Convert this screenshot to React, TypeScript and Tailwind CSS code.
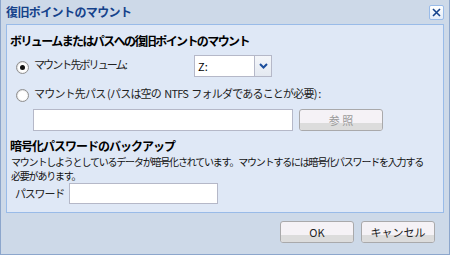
import React from "react";

const jp = "font-['MS_UI_Gothic','Noto_Sans_CJK_JP',sans-serif]";

const Radio = ({ checked }: { checked?: boolean }) => (
  <span className="relative inline-flex h-[13px] w-[13px] shrink-0 items-center justify-center rounded-full border border-[#8f8f8f] bg-gradient-to-br from-[#dcdcdc] to-white">
    <span className="h-[9px] w-[9px] rounded-full bg-white" />
    {checked && (
      <span className="absolute h-[5px] w-[5px] rounded-full bg-[#111]" />
    )}
  </span>
);

const Btn = ({
  label,
  disabled,
  className,
}: {
  label: string;
  disabled?: boolean;
  className?: string;
}) => (
  <button
    className={
      "relative h-[22px] overflow-hidden rounded-[3px] border border-[#a9a9ab] bg-[#f5f2f6] text-[11px] " +
      (disabled ? "text-[#9a9a9a] " : "text-[#222] ") +
      (className ?? "")
    }
  >
    <span className="absolute inset-x-0 bottom-0 h-[7px] bg-[#dcdcdc]" />
    <span className="relative leading-[20px]">{label}</span>
  </button>
);

export default function App() {
  return (
    <div
      className={`flex h-[255px] w-[450px] flex-col border-x border-b border-[#8ca6cc] bg-[#cdd9e8] ${jp} antialiased`}
    >
      {/* title bar */}
      <div className="flex h-[24px] items-center justify-between pl-[5px] pr-[5px]">
        <span className="text-[12px] font-bold tracking-[-0.6px] text-[#15428b]">
          復旧ポイントのマウント
        </span>
        <span className="flex h-[15px] w-[15px] items-center justify-center rounded-[2px] border border-[#99bbe8] bg-gradient-to-b from-white to-[#e3ecf8]">
          <svg width="9" height="9" viewBox="0 0 9 9">
            <path
              d="M1 1L8 8M8 1L1 8"
              stroke="#15428b"
              strokeWidth="1.6"
              fill="none"
            />
          </svg>
        </span>
      </div>

      {/* panel */}
      <div className="mx-[5px] flex h-[189px] flex-col border border-[#99bbe8] bg-[#dfe8f6] px-[3px]">
        <h3 className="mt-[9px] text-[12px] font-bold leading-[14px] tracking-[-1.6px] text-black">
          ボリュームまたはパスへの復旧ポイントのマウント
        </h3>

        <div className="mt-[7px] flex h-[22px] items-center">
          <span className="ml-[6px] -mt-[3px]">
            <Radio checked />
          </span>
          <span className="ml-[5px] -mt-[3px] w-[160px] text-[11px] tracking-[-1.9px] text-[#222]">
            マウント先ボリューム:
          </span>
          <div className="flex h-[22px] w-[78px] border border-[#b5b8c8] bg-white">
            <span className="flex-1 pl-[3px] text-[11px] leading-[20px] text-black">
              Z:
            </span>
            <span className="flex w-[17px] items-center justify-center border-l border-[#b5b8c8] bg-gradient-to-b from-[#f4f6fa] to-[#e4e9f1]">
              <svg width="9" height="6" viewBox="0 0 9 6">
                <path
                  d="M1 1L4.5 4.5L8 1"
                  stroke="#1c4e9c"
                  strokeWidth="2"
                  fill="none"
                />
              </svg>
            </span>
          </div>
        </div>

        <div className="mt-[8px] flex h-[16px] items-center">
          <span className="ml-[6px]">
            <Radio />
          </span>
          <span className="ml-[5px] whitespace-pre text-[11px] tracking-[-0.8px] text-[#222]">
            マウント先パス (パスは空の  NTFS  フォルダであることが必要) :
          </span>
        </div>

        <div className="mt-[8px] flex items-center">
          <div className="ml-[23px] h-[22px] w-[260px] border border-[#b5b8c8] bg-white" />
          <Btn label="参 照" disabled className="ml-[6px] w-[84px]" />
        </div>

        <h3 className="mt-[8px] text-[12px] font-bold leading-[14px] tracking-[-1px] text-black">
          暗号化パスワードのバックアップ
        </h3>
        <p className="mt-[2px] pl-[1px] text-[10px] leading-[14px] tracking-[-1.2px] text-[#111]">
          マウントしようとしているデータが暗号化されています。マウントするには暗号化パスワードを入力する
          <br />
          必要があります。
        </p>
        <div className="flex items-center">
          <span className="ml-[5px] w-[54px] text-[11px] tracking-[-1.2px] text-[#222]">
            パスワード
          </span>
          <div className="h-[21px] w-[149px] border border-[#b5b8c8] bg-white" />
        </div>
      </div>

      {/* footer */}
      <div className="flex justify-end gap-[7px] pr-[14px] pt-[8px]">
        <Btn label="OK" className="w-[74px]" />
        <Btn label="キャンセル" className="w-[74px]" />
      </div>
    </div>
  );
}
